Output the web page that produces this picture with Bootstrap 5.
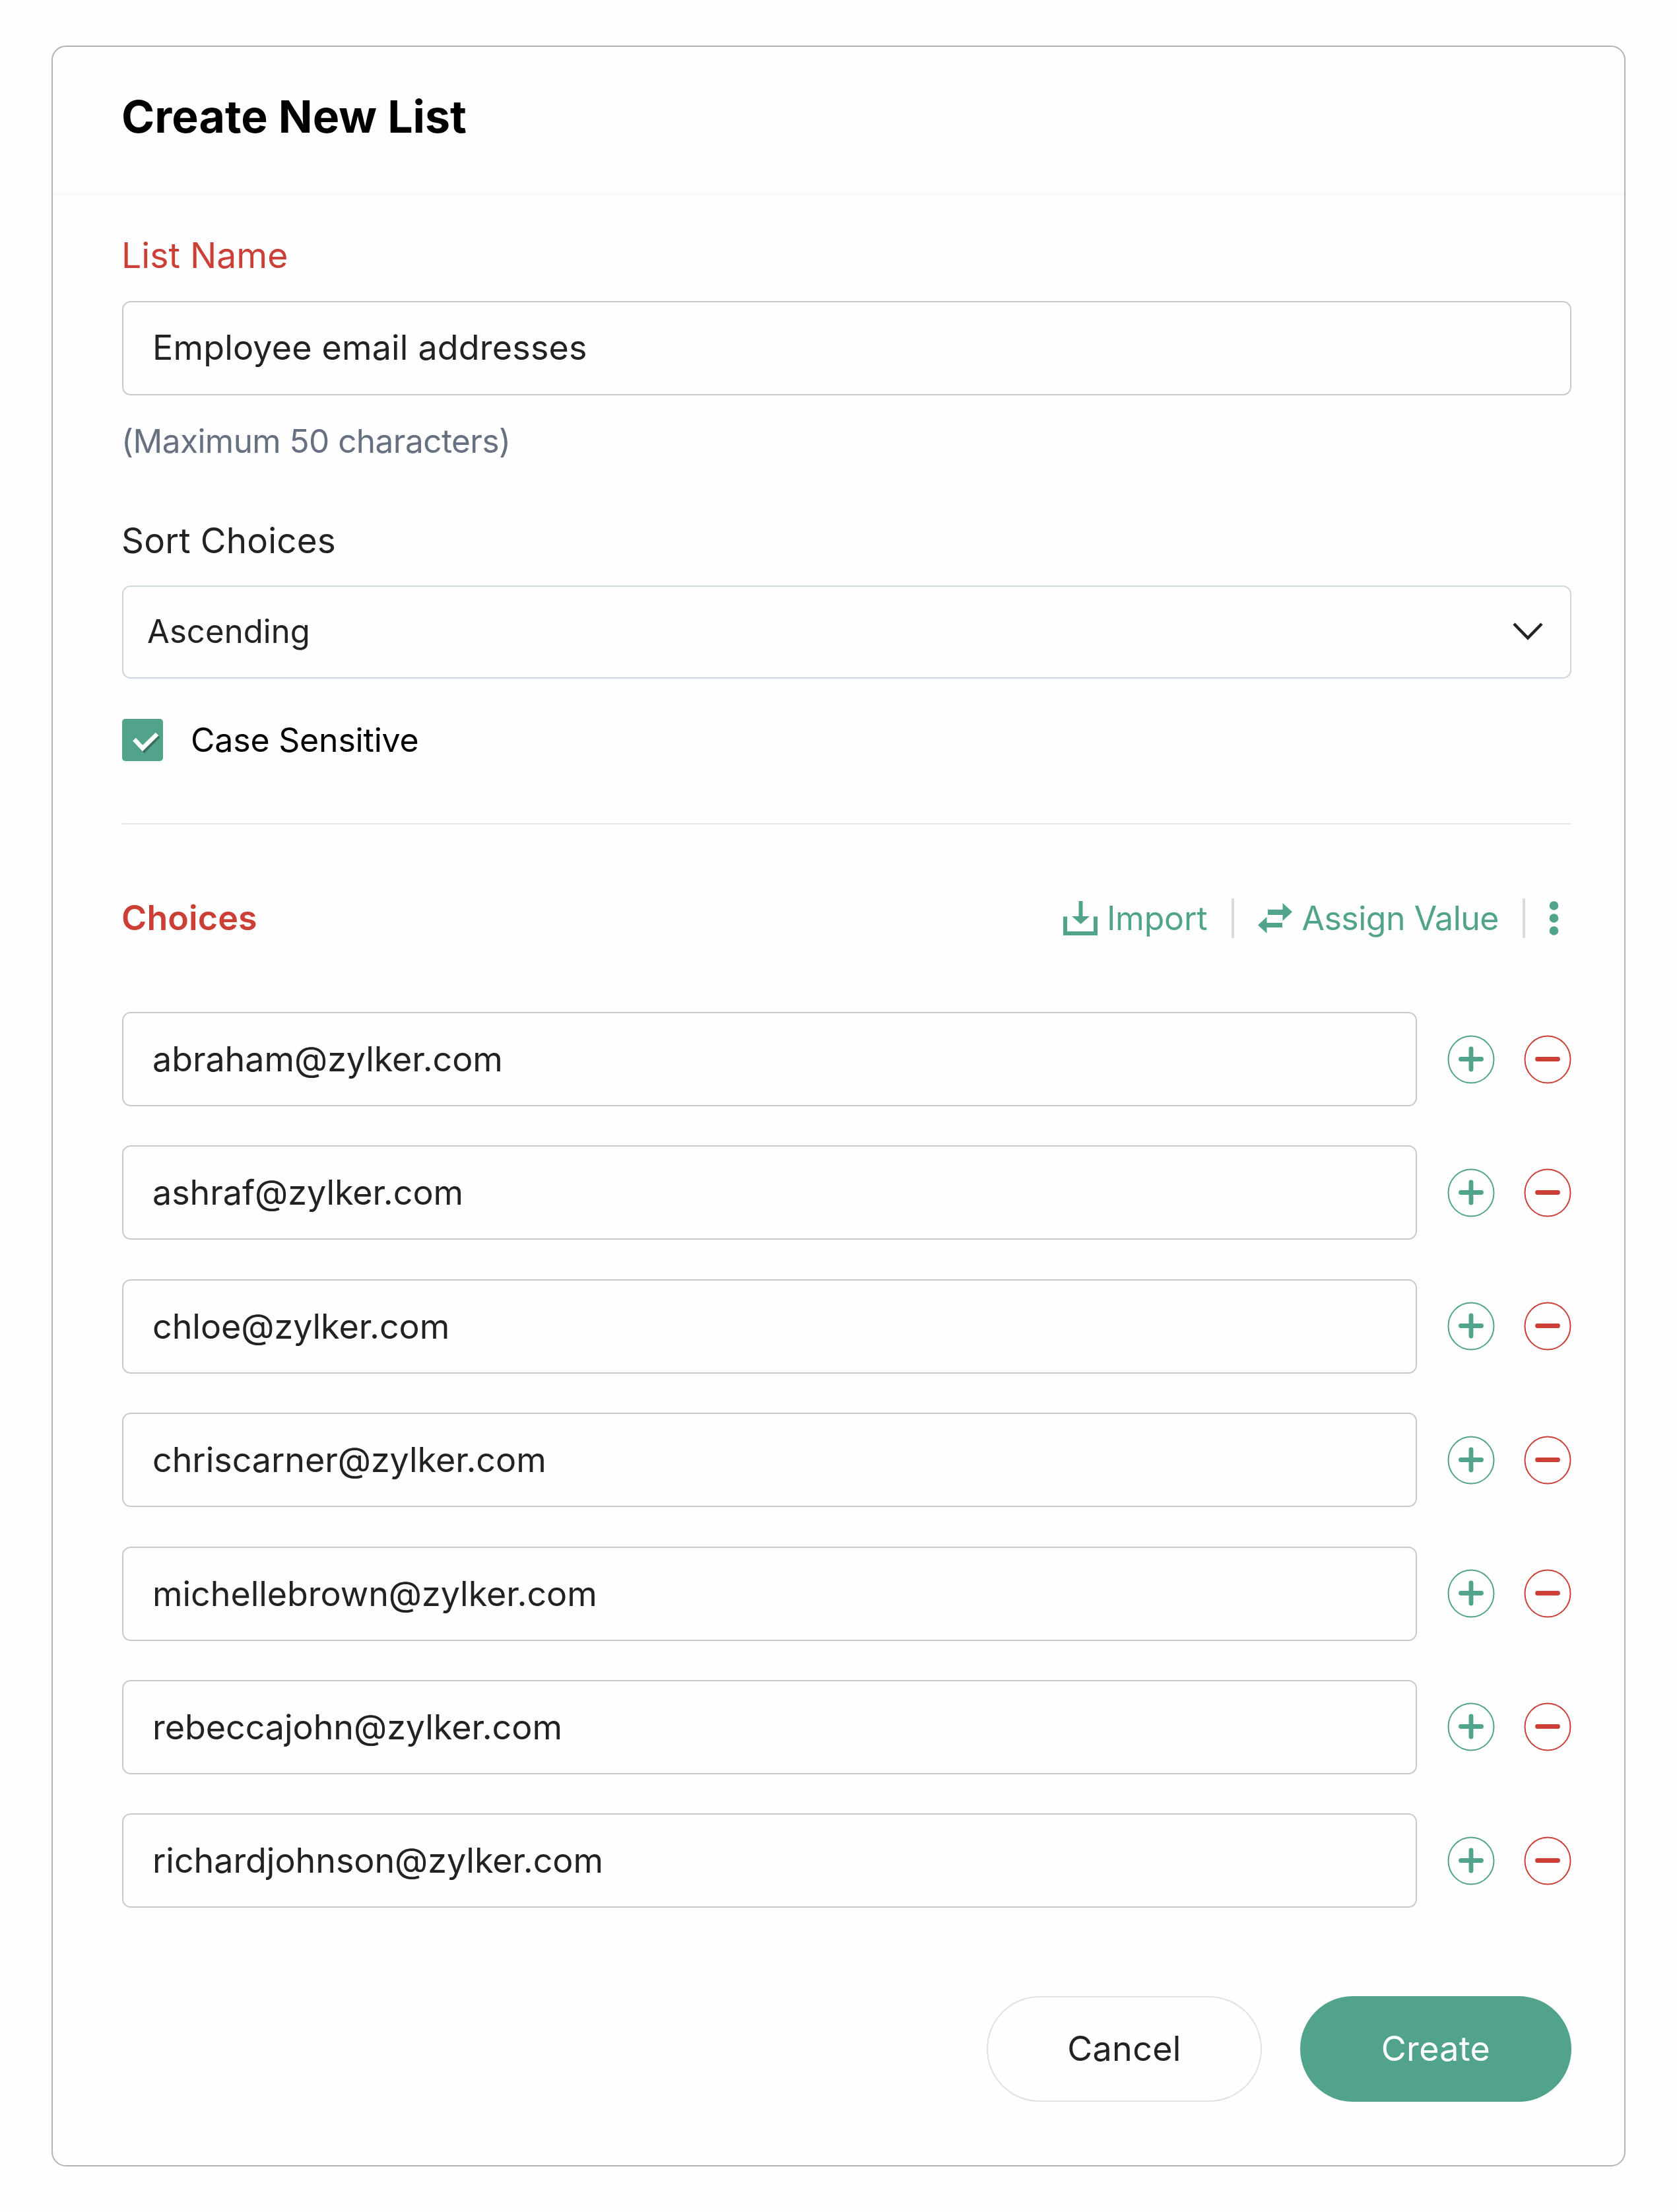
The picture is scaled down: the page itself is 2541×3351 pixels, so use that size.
<!DOCTYPE html>
<html lang="en">
<head>
  <meta charset="UTF-8" />
  <meta name="viewport" content="width=device-width, initial-scale=1.0"/>
  <title>Create New List</title>
  <link href="https://cdn.jsdelivr.net/npm/bootstrap@5.3.3/dist/css/bootstrap.min.css" rel="stylesheet" />
  <style>
    body {
      background-color: #fefefe;
      color: #222;
      font-family: Inter, "Liberation Sans", sans-serif;
      font-size: 52px;
      line-height: 64px;
    }
    .list-dialog {
      width: 2385px;
      height: 3213px;
      margin: 69px 0 0 78px;
      border: 2px solid #b3b3b3;
      border-radius: 22px;
      background-color: #fefefe;
      color: #222;
    }
    .list-dialog .card-header {
      height: 225px;
      padding: 63px 104px 0;
      background: none;
      border-bottom: 3px solid #f8f8f8;
    }
    .list-dialog .card-body {
      padding: 59px 80px 0 105px;
    }
    .dialog-title {
      font-size: 68px;
      line-height: 84px;
      font-weight: 700;
      color: #000;
    }
    .form-label {
      display: block;
      height: 64px;
      margin: 0 0 37px -1px;
      font-size: 53.5px;
      white-space: nowrap;
    }
    .sort-label {
      margin-top: 87px;
      margin-bottom: 36px;
      font-size: 53px;
      letter-spacing: 0.2px;
    }
    .text-req {
      color: #cb3f37;
    }
    .form-control,
    .form-select {
      height: 143px;
      padding: 0 44px 2px;
      border: 2px solid #c9c9c9;
      border-radius: 13px;
      background-color: #fefefe;
      color: #222;
      font-size: 52px;
      line-height: 64px;
      letter-spacing: -0.05px;
    }
    .list-name {
      letter-spacing: 0.18px;
    }
    .form-select {
      height: 141px;
      padding: 0 36px 2px;
      border-color: #ccd6e0;
      background-image: none;
      font-size: 49px;
      letter-spacing: 0.1px;
    }
    .select-arrow {
      right: 40px;
      top: 51px;
    }
    .hint {
      margin: 37px 0 0 -1px;
      font-size: 49.5px;
      letter-spacing: -0.55px;
      color: #677080;
    }
    .case-row {
      gap: 42px;
      margin-top: 61px;
      font-size: 50px;
      letter-spacing: -0.2px;
    }
    .form-check-input[type="checkbox"] {
      width: 62px;
      height: 64px;
      margin: 0;
      border: 0;
      border-radius: 5px;
    }
    .form-check-input:checked[type="checkbox"] {
      background-color: #52a38b;
      background-size: 62px 64px;
      background-image: url("data:image/svg+xml,%3csvg xmlns='http://www.w3.org/2000/svg' viewBox='0 0 62 64' fill='none' stroke-width='6.500'%3e%3cpath d='M29 43l4.500 4.500L55 26' stroke='%233c6e60'/%3e%3cpath d='M18.500 31L31 44.500 53 23' stroke='%23fff'/%3e%3c/svg%3e");
    }
    .section-line {
      height: 2px;
      margin: 94px 0 110px;
      background-color: #e6e6e6;
    }
    .choices-head {
      gap: 36px;
      padding-right: 19px;
    }
    .choices-title {
      margin-left: -1px;
      letter-spacing: 0.1px;
    }
    .link-tool {
      gap: 14px;
      color: #52a38b;
      font-size: 50px;
      letter-spacing: -0.5px;
      text-decoration: none;
      white-space: nowrap;
    }
    .tool-line {
      width: 4px;
      height: 60px;
      background-color: #d6dbe0;
    }
    .link-import {
      margin-right: 1px;
      letter-spacing: -0.2px;
    }
    .choice-list {
      display: grid;
      gap: 59.4px;
      margin-top: 110px;
    }
    .choice-list .form-control {
      width: 1962px;
      padding-bottom: 0;
    }
    .add-icon {
      margin-left: 46px;
    }
    .remove-icon {
      margin-left: 44px;
    }
    .dialog-actions {
      gap: 58px;
      margin-top: 134px;
    }
    .btn-pill {
      width: 417px;
      height: 160px;
      border: 2px solid #dde2e5;
      border-radius: 80px;
      font-size: 52px;
      letter-spacing: 0.3px;
      color: #222;
    }
    .btn-create {
      width: 411px;
      border-color: #52a38b;
      background-color: #52a38b;
      color: #fff;
    }
    svg {
      display: block;
      flex: none;
    }
  </style>
</head>
<body>
  <div class="card list-dialog">
    <div class="card-header">
      <h1 class="dialog-title mb-0">Create New List</h1>
    </div>
    <div class="card-body">
      <form>
        <label class="form-label text-req" for="listName">List Name</label>
        <input type="text" class="form-control list-name" id="listName" value="Employee email addresses" />
        <div class="hint">(Maximum 50 characters)</div>

        <label class="form-label sort-label" for="sortBy">Sort Choices</label>
        <div class="position-relative">
          <select class="form-select" id="sortBy">
            <option selected>Ascending</option>
            <option>Descending</option>
          </select>
          <svg class="select-arrow position-absolute pe-none" width="52" height="36" viewBox="0 0 52 36" fill="none" stroke="#222" stroke-width="4.500"><path d="M5 7l21 21.500L47 7"/></svg>
        </div>

        <div class="d-flex align-items-center case-row">
          <input class="form-check-input" type="checkbox" id="caseSensitive" checked />
          <label for="caseSensitive" class="text-black">Case Sensitive</label>
        </div>

        <div class="section-line"></div>

        <div class="d-flex align-items-center choices-head">
          <span class="text-req fw-semibold choices-title me-auto">Choices</span>
          <a href="#" class="link-tool link-import d-flex align-items-center">
            <svg width="52" height="52" viewBox="0 0 52 52" fill="none" stroke="#52a38b" stroke-width="6"><path d="M3 23.500V49h46V23.500M26.500 0v26"/><path d="M13 23h27L26.500 35z" fill="#52a38b" stroke="none"/></svg>
            Import
          </a>
          <div class="tool-line"></div>
          <a href="#" class="link-tool d-flex align-items-center">
            <svg width="52" height="46" viewBox="0 0 52 46" fill="#52a38b"><path d="M15 10h22.500V0L52 13.500 37.500 27v-9H15zM37 30H13.500v-9L0 33.500 13.500 46v-9H37z"/></svg>
            Assign Value
          </a>
          <div class="tool-line"></div>
          <svg width="15" height="54" viewBox="0 0 15 54" fill="#52a38b"><circle cx="7.500" cy="8" r="6.800"/><circle cx="7.500" cy="27" r="6.800"/><circle cx="7.500" cy="46" r="6.800"/></svg>
        </div>

        <div class="choice-list" id="choiceList"></div>

        <div class="d-flex justify-content-end dialog-actions">
          <button type="button" class="btn btn-pill">Cancel</button>
          <button type="button" class="btn btn-pill btn-create">Create</button>
        </div>
      </form>
    </div>
  </div>

  <script src="https://cdn.jsdelivr.net/npm/bootstrap@5.3.3/dist/js/bootstrap.bundle.min.js"></script>
  <script>
    const choices = ["abraham", "ashraf", "chloe", "chriscarner", "michellebrown", "rebeccajohn", "richardjohnson"];
    const list = document.getElementById("choiceList");

    choices.forEach((name) => {
      list.innerHTML += `
        <div class="d-flex align-items-center">
          <input type="text" class="form-control" value="${name}@zylker.com" />
          <svg class="add-icon" width="72" height="74" viewBox="0 0 72 74" fill="none" stroke="#52a38b"><ellipse cx="36" cy="37" rx="34.500" ry="35.500" stroke-width="2"/><path d="M20.500 36.500h31M36 21v31" stroke-width="6.800" stroke-linecap="round"/></svg>
          <svg class="remove-icon" width="72" height="74" viewBox="0 0 72 74" fill="none" stroke="#cb3f37"><ellipse cx="36" cy="37" rx="34.500" ry="35.500" stroke-width="2"/><path d="M20.500 36.500h31" stroke-width="6.800" stroke-linecap="round"/></svg>
        </div>`;
    });
  </script>
</body>
</html>
